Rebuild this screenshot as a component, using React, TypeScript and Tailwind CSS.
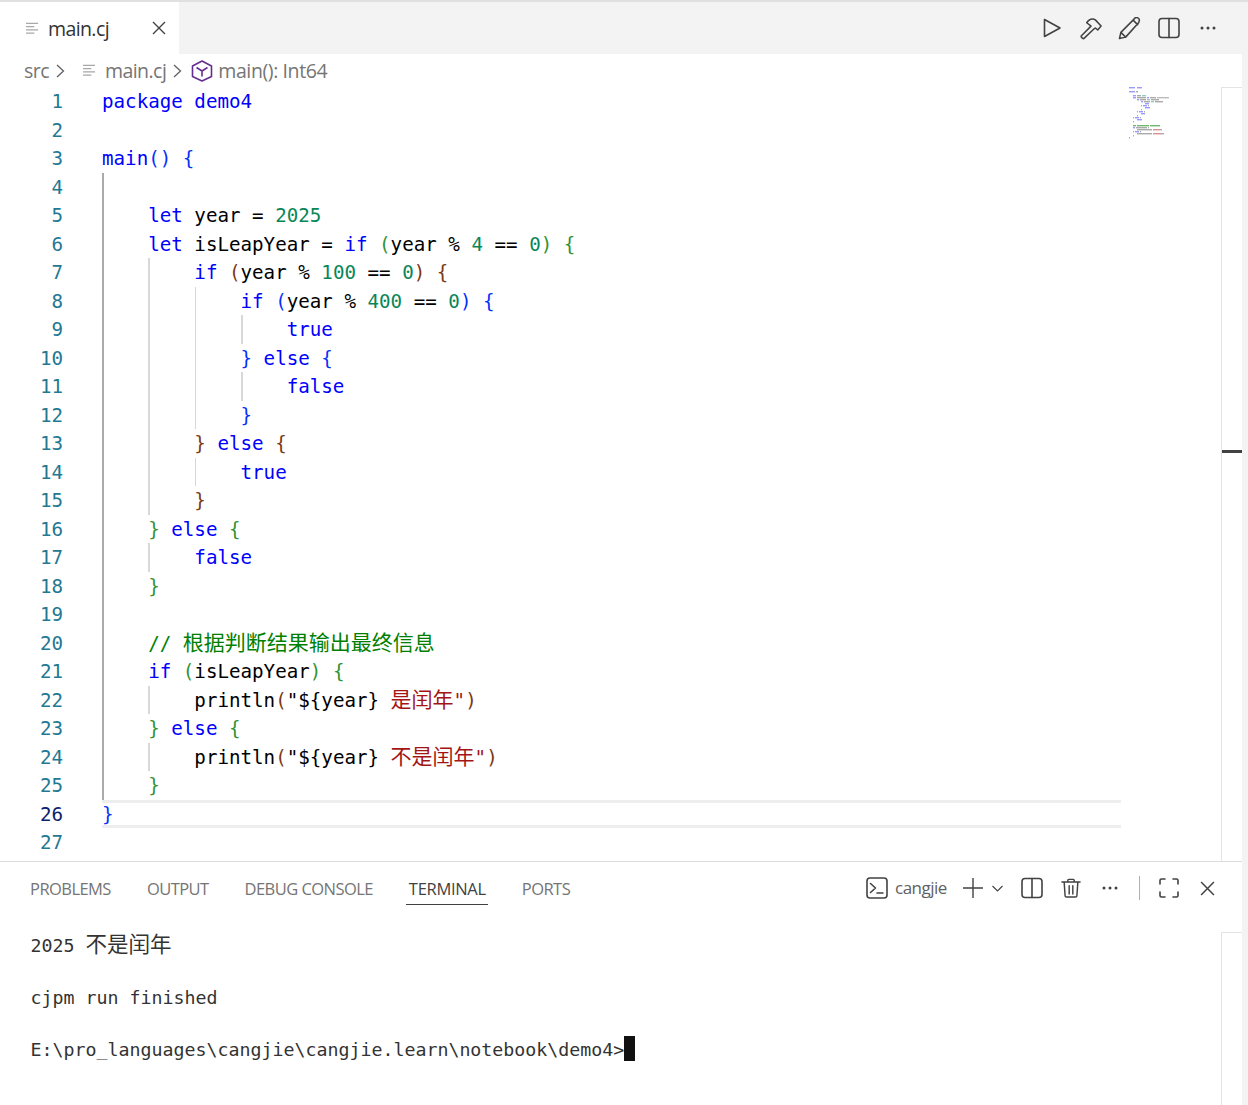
import { Fragment, type ReactNode } from "react"

const CODE_FONT = "font-['DejaVu_Sans_Mono','Noto_Sans_CJK_SC',monospace]"

function K({ children }: { children: ReactNode }) {
  return <span className="text-[#0000ff]">{children}</span>
}
function N({ children }: { children: ReactNode }) {
  return <span className="text-[#098658]">{children}</span>
}
function B1({ children }: { children: ReactNode }) {
  return <span className="text-[#0431fa]">{children}</span>
}
function B2({ children }: { children: ReactNode }) {
  return <span className="text-[#319331]">{children}</span>
}
function B3({ children }: { children: ReactNode }) {
  return <span className="text-[#7b3814]">{children}</span>
}
function Cjk({ children }: { children: ReactNode }) {
  return <span className="font-['Noto_Sans_CJK_SC',sans-serif] text-[21px] leading-none">{children}</span>
}

const I1 = "    "
const I2 = "        "
const I3 = "            "

const lines: { guides: number[]; code: ReactNode }[] = [
  { guides: [], code: <Fragment><K>package demo4</K></Fragment> },
  { guides: [], code: "" },
  { guides: [], code: <Fragment><K>main</K><B1>() {"{"}</B1></Fragment> },
  { guides: [0], code: "" },
  { guides: [0], code: <Fragment>{I1}<K>let</K> year = <N>2025</N></Fragment> },
  { guides: [0], code: <Fragment>{I1}<K>let</K> isLeapYear = <K>if</K> <B2>(</B2>year % <N>4</N> == <N>0</N><B2>) {"{"}</B2></Fragment> },
  { guides: [0, 1], code: <Fragment>{I2}<K>if</K> <B3>(</B3>year % <N>100</N> == <N>0</N><B3>) {"{"}</B3></Fragment> },
  { guides: [0, 1, 2], code: <Fragment>{I3}<K>if</K> <B1>(</B1>year % <N>400</N> == <N>0</N><B1>) {"{"}</B1></Fragment> },
  { guides: [0, 1, 2, 3], code: <Fragment>{I3}{I1}<K>true</K></Fragment> },
  { guides: [0, 1, 2], code: <Fragment>{I3}<B1>{"}"}</B1> <K>else</K> <B1>{"{"}</B1></Fragment> },
  { guides: [0, 1, 2, 3], code: <Fragment>{I3}{I1}<K>false</K></Fragment> },
  { guides: [0, 1, 2], code: <Fragment>{I3}<B1>{"}"}</B1></Fragment> },
  { guides: [0, 1], code: <Fragment>{I2}<B3>{"}"}</B3> <K>else</K> <B3>{"{"}</B3></Fragment> },
  { guides: [0, 1, 2], code: <Fragment>{I3}<K>true</K></Fragment> },
  { guides: [0, 1], code: <Fragment>{I2}<B3>{"}"}</B3></Fragment> },
  { guides: [0], code: <Fragment>{I1}<B2>{"}"}</B2> <K>else</K> <B2>{"{"}</B2></Fragment> },
  { guides: [0, 1], code: <Fragment>{I2}<K>false</K></Fragment> },
  { guides: [0], code: <Fragment>{I1}<B2>{"}"}</B2></Fragment> },
  { guides: [0], code: "" },
  { guides: [0], code: <span className="text-[#008000]">{I1}// <Cjk>根据判断结果输出最终信息</Cjk></span> },
  { guides: [0], code: <Fragment>{I1}<K>if</K> <B2>(</B2>isLeapYear<B2>) {"{"}</B2></Fragment> },
  { guides: [0, 1], code: <Fragment>{I2}println<B3>(</B3>"{"${year}"} <span className="text-[#a31515]"><Cjk>是闰年</Cjk>"</span><B3>)</B3></Fragment> },
  { guides: [0], code: <Fragment>{I1}<B2>{"}"}</B2> <K>else</K> <B2>{"{"}</B2></Fragment> },
  { guides: [0, 1], code: <Fragment>{I2}println<B3>(</B3>"{"${year}"} <span className="text-[#a31515]"><Cjk>不是闰年</Cjk>"</span><B3>)</B3></Fragment> },
  { guides: [0], code: <Fragment>{I1}<B2>{"}"}</B2></Fragment> },
  { guides: [], code: <B1>{"}"}</B1> },
  { guides: [], code: "" },
]

function Icon({ className, vb = 24, children }: { className?: string; vb?: number; children: ReactNode }) {
  return (
    <svg viewBox={`0 0 ${vb} ${vb}`} fill="none" stroke="currentColor" strokeWidth={1.6} strokeLinejoin="round" strokeLinecap="round" className={className}>
      {children}
    </svg>
  )
}

function FileLines({ className }: { className: string }) {
  return (
    <svg viewBox="0 0 14 14" className={className} fill="none" stroke="#a8a8a8" strokeWidth={1.2}>
      <path d="M0 1.5h13M0 5h9M0 8.5h13M0 12h9" />
    </svg>
  )
}

function Chevron() {
  return (
    <svg viewBox="0 0 9 14" className="w-[9px] h-[14px]" fill="none" stroke="#616161" strokeWidth={1.3}>
      <path d="M1 1l6.5 6L1 13" />
    </svg>
  )
}

function Cube() {
  return (
    <svg viewBox="0 0 22 24" className="w-[22px] h-[24px]" fill="none" stroke="#652d90" strokeWidth={1.6} strokeLinejoin="round">
      <path d="M11 2l9.5 5v10.5L11 22l-9.5-4.5V7z" />
      <path d="M5.5 8.5L11 12l5.5-3.5M11 12v5.5" />
    </svg>
  )
}

function Split({ className }: { className: string }) {
  return (
    <Icon vb={22} className={className}>
      <rect x="1" y="1.5" width="20" height="19" rx="3" />
      <path d="M11 1.5v19" />
    </Icon>
  )
}

function Dots() {
  return (
    <svg viewBox="0 0 16 4" className="w-[16px] h-[4px]" fill="#424242">
      <circle cx="2" cy="2" r="1.5" />
      <circle cx="8" cy="2" r="1.5" />
      <circle cx="14" cy="2" r="1.5" />
    </svg>
  )
}

function Close({ className }: { className: string }) {
  return (
    <svg viewBox="0 0 14 14" className={className} fill="none" stroke="#424242" strokeWidth={1.4}>
      <path d="M1 1l12 12M13 1L1 13" />
    </svg>
  )
}

// the tiny overview of the code, same shapes as the text
const minimapRows: [number, number, string][][] = [
  [[0, 6, "#9a9aff"], [8, 5, "#9a9aff"]],
  [],
  [[0, 6, "#9a9aff"], [7, 2, "#aaa"]],
  [],
  [[4, 3, "#9a9aff"], [8, 4, "#aaa"], [13, 4, "#8fd0b8"]],
  [[4, 3, "#9a9aff"], [8, 9, "#aaa"], [18, 2, "#9a9aff"], [21, 6, "#aaa"], [28, 12, "#bbb"]],
  [[8, 2, "#9a9aff"], [11, 6, "#aaa"], [18, 3, "#8fd0b8"], [22, 8, "#aaa"]],
  [[12, 2, "#9a9aff"], [15, 6, "#aaa"], [22, 3, "#8fd0b8"], [26, 8, "#aaa"]],
  [[16, 4, "#9a9aff"]],
  [[12, 1, "#aaa"], [14, 4, "#9a9aff"], [19, 1, "#aaa"]],
  [[16, 5, "#9a9aff"]],
  [[12, 1, "#aaa"]],
  [[8, 1, "#aaa"], [10, 4, "#9a9aff"], [15, 1, "#aaa"]],
  [[12, 4, "#9a9aff"]],
  [[8, 1, "#aaa"]],
  [[4, 1, "#aaa"], [6, 4, "#9a9aff"], [11, 1, "#aaa"]],
  [[8, 5, "#9a9aff"]],
  [[4, 1, "#aaa"]],
  [],
  [[4, 3, "#70b870"], [8, 12, "#70b870"], [21, 10, "#70b870"]],
  [[4, 2, "#9a9aff"], [7, 11, "#aaa"], [19, 1, "#aaa"]],
  [[8, 15, "#aaa"], [24, 7, "#d89090"], [31, 2, "#aaa"]],
  [[4, 1, "#aaa"], [6, 4, "#9a9aff"], [11, 1, "#aaa"]],
  [[8, 15, "#aaa"], [24, 9, "#d89090"], [33, 2, "#aaa"]],
  [[4, 1, "#aaa"]],
  [[0, 1, "#9a9aff"]],
]

function Minimap() {
  return (
    <svg width="44" height="56" viewBox="0 0 44 56" className="ml-[8px]">
      {minimapRows.map((row, y) =>
        row.map(([x, w, color], i) => (
          <rect key={`${y}-${i}`} x={x} y={y * 2} width={w} height="1.4" fill={color} />
        )),
      )}
    </svg>
  )
}

const guideColumn = ["left-0 bg-[#aaaaaa] w-[2px]", "left-[46px] bg-[#d8d8d8] w-[1.5px]", "left-[92.5px] bg-[#d8d8d8] w-[1.5px]", "left-[139px] bg-[#d8d8d8] w-[1.5px]"]

function Editor() {
  return (
    <div className="h-[774px] mr-[6px] bg-white flex overflow-hidden">
      <div className={`w-[102px] shrink-0 ${CODE_FONT}`}>
        {lines.map((_, i) => (
          <div key={i} className={`h-[28.5px] leading-[30px] text-[19.18px] text-right w-[63px] ${i === 25 ? "text-[#0b216f]" : "text-[#237893]"}`}>
            {i + 1}
          </div>
        ))}
      </div>
      <div className={`w-[1019px] shrink-0 ${CODE_FONT}`}>
        {lines.map((line, i) => (
          <div key={i} className={`relative h-[28.5px] leading-[30px] text-[19.18px] text-black whitespace-pre ${i === 25 ? "shadow-[inset_0_3px_0_#eeeeee,inset_0_-3px_0_#eeeeee]" : ""}`}>
            {line.guides.map((g) => (
              <span key={g} className={`absolute top-0 bottom-0 ${guideColumn[g]}`} />
            ))}
            {line.code}
          </div>
        ))}
      </div>
      <div className="w-[100px] shrink-0">
        <Minimap />
      </div>
      <div className="w-[21px] shrink-0 border-l border-t border-[#e4e4e4] relative">
        <div className="absolute left-0 right-0 top-[362px] h-[3px] bg-[#424242]" />
      </div>
    </div>
  )
}

function Panel() {
  const tabs = ["PROBLEMS", "OUTPUT", "DEBUG CONSOLE", "TERMINAL", "PORTS"]
  return (
    <div className="flex-1 border-t-[1.5px] border-[#dcdcdc] mr-[6px] bg-white flex flex-col">
      <div className="h-[70px] flex">
        <div className="flex gap-[36px] pl-[30px] pt-[15px] w-[860px] shrink-0 text-[16.5px] tracking-[-0.55px]">
          {tabs.map((t) => (
            <div key={t} className={`relative h-[28px] leading-[24px] ${t === "TERMINAL" ? "text-[#424242] tracking-[-0.3px]" : "text-[#757575]"}`}>
              {t}
              {t === "TERMINAL" && <div className="absolute -left-[3px] -right-[2px] bottom-0 h-[1px] bg-[#424242]" />}
            </div>
          ))}
        </div>
        <div className="flex items-center h-[52px] pl-[6px] text-[#424242]">
          <Icon vb={22} className="w-[22px] h-[22px]">
            <rect x="1" y="1" width="20" height="20" rx="3" />
            <path d="M4.500 6.500l5 4.500-5 4.500M11 16h6" />
          </Icon>
          <span className="ml-[7px] w-[52px] text-[17px] tracking-[-0.5px] text-[#616161]">cangjie</span>
          <svg viewBox="0 0 20 20" className="ml-[16px] w-[20px] h-[20px]" stroke="#424242" strokeWidth={1.4}>
            <path d="M0 10h20M10 0v20" />
          </svg>
          <svg viewBox="0 0 11 7" className="ml-[9px] w-[11px] h-[7px]" fill="none" stroke="#424242" strokeWidth={1.1}>
            <path d="M0.500 1l5 5 5-5" />
          </svg>
          <Split className="ml-[18px] w-[22px] h-[22px]" />
          <Icon vb={22} className="ml-[18px] w-[20px] h-[22px]">
            <path d="M1 4.500h20M7.500 4V2.500a1 1 0 0 1 1-1h5a1 1 0 0 1 1 1V4M3.500 5l1 14.500a1.500 1.500 0 0 0 1.500 1.500h10a1.500 1.500 0 0 0 1.500-1.500L18.500 5M9 8.500v9M13 8.500v9" />
          </Icon>
          <div className="ml-[21px]"><Dots /></div>
          <div className="ml-[21px] w-[1px] h-[24px] bg-[#b0b0b0]" />
          <Icon vb={20} className="ml-[19px] w-[20px] h-[20px]">
            <path d="M1 6V2.500A1.500 1.500 0 0 1 2.500 1H6M14 1h3.500A1.500 1.500 0 0 1 19 2.500V6M19 14v3.500a1.500 1.500 0 0 1-1.500 1.500H14M6 19H2.500A1.500 1.500 0 0 1 1 17.500V14" />
          </Icon>
          <div className="ml-[21px]"><Close className="w-[15px] h-[15px]" /></div>
        </div>
      </div>
      <div className="flex-1 flex">
        <div className={`w-[1221px] pl-[30.5px] text-[18.27px] leading-[26px] text-[#333333] ${CODE_FONT}`}>
          <div className="h-[26px]">2025 <span className="font-['Noto_Sans_CJK_SC',sans-serif] text-[21.5px] leading-none">不是闰年</span></div>
          <div className="h-[26px]" />
          <div className="h-[26px] leading-[28px]">cjpm run finished</div>
          <div className="h-[26px]" />
          <div className="h-[26px] flex leading-[28px]">
            <span>E:\pro_languages\cangjie\cangjie.learn\notebook\demo4&gt;</span>
            <span className="w-[11px] h-[25px] bg-[#111111]" />
          </div>
        </div>
        <div className="w-[21px] border-l border-t border-[#e4e4e4]" />
      </div>
    </div>
  )
}

export default function App() {
  return (
    <div className="w-[1248px] h-[1105px] overflow-hidden bg-[#f3f3f3] flex flex-col font-['Open_Sans',sans-serif]">
      <div className="h-[2px] bg-[#e0e0e0]" />
      <div className="h-[52px] mr-[6px] flex items-stretch justify-between">
        <div className="w-[179px] bg-white flex items-center pl-[26px]">
          <FileLines className="w-[13px] h-[13px]" />
          <span className="ml-[9px] pt-[2px] text-[19.5px] tracking-[-0.6px] text-[#333333]">main.cj</span>
          <Close className="ml-[43px] w-[14px] h-[14px]" />
        </div>
        <div className="flex items-center pr-[26px] text-[#424242]">
          <Icon vb={20} className="w-[20px] h-[20px]">
            <path d="M2.500 1.500v17L18 10z" />
          </Icon>
          <Icon vb={24} className="ml-[18px] w-[23px] h-[23px]">
            <path d="M1.500 19.500L11.500 9.500 7 6C9 2.500 13 1 16 3L22 9.500 18.500 13.500 16 11.500 14.500 12.500 4.500 22Q3.500 23 2.500 22L1.500 21Q0.800 20.200 1.500 19.500Z" />
          </Icon>
          <Icon vb={24} className="ml-[15px] w-[23px] h-[23px]">
            <path d="M1.500 22.500l1.500-6.500L17 2a2.800 2.800 0 0 1 5 2.500 3 3 0 0 1-.5 1.500L8 21zM3 16l5 5M16 3.500l4.500 4.500" />
          </Icon>
          <Split className="ml-[17px] w-[22px] h-[22px]" />
          <div className="ml-[20px]"><Dots /></div>
        </div>
      </div>
      <div className="h-[33px] mr-[6px] bg-white flex items-center text-[19.5px] tracking-[-0.55px] text-[#757575]">
        <span className="ml-[24px]">src</span>
        <span className="ml-[7px]"><Chevron /></span>
        <FileLines className="ml-[18px] w-[13px] h-[13px]" />
        <span className="ml-[9px]">main.cj</span>
        <span className="ml-[7px]"><Chevron /></span>
        <span className="ml-[9px]"><Cube /></span>
        <span className="ml-[5px] tracking-[-0.4px]">main(): Int64</span>
      </div>
      <Editor />
      <Panel />
    </div>
  )
}
